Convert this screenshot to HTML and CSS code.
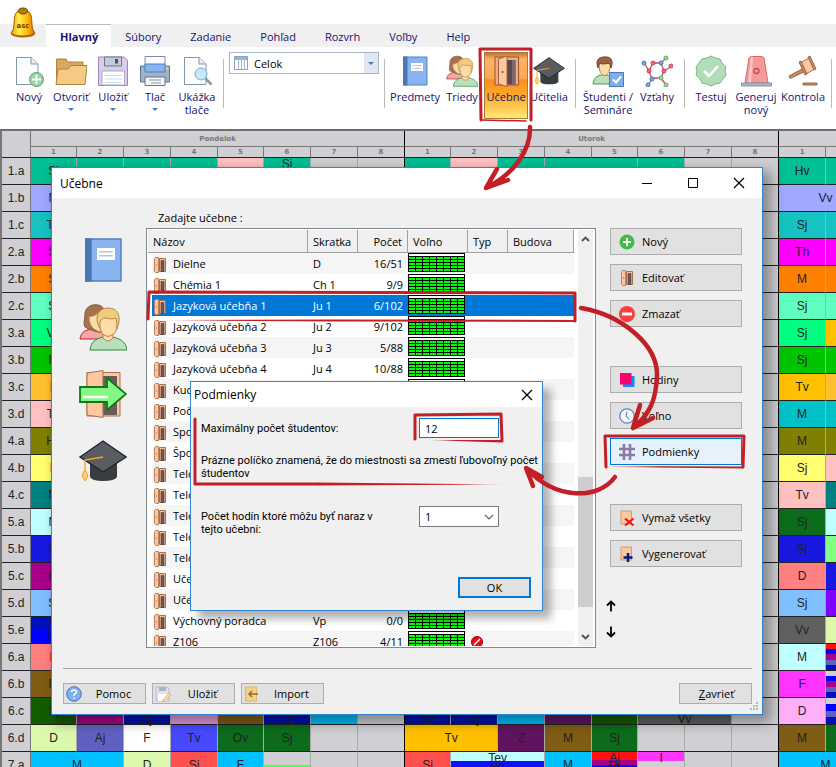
FILE: index.html
```html
<!DOCTYPE html>
<html lang="sk">
<head>
<meta charset="utf-8">
<title>Učebne</title>
<link rel="stylesheet" href="styles.css">
</head>
<body>
<svg class="defs" aria-hidden="true">
  <symbol id="door" viewBox="0 0 12 16">
    <path d="M5.500 1.500H11.500V14.500H5.500Z" fill="#fcbf94" stroke="#a5714f"/>
    <path d="M7 3.500H10V14.500H7Z" fill="#6b595c" stroke="#4b3c40" stroke-width=".6"/>
    <path d="M.5 1.500L1.500 .5H4.500V15.500H1.500L.5 14.500Z" fill="#ffc6a0" stroke="#b98260"/>
    <circle cx="2.500" cy="8" r=".6" fill="#8d5038"/>
  </symbol>
  <symbol id="book" viewBox="0 0 32 32">
    <path d="M4.500 2H28V30H4.500Z" fill="#8ab4f0" stroke="#5580c0"/>
    <path d="M4 1.500H8.500V30.500H4Z" fill="#4b77b8"/>
    <path d="M12 8H24V16H12Z" fill="#fff"/>
    <path d="M13.500 10.500H22.500M13.500 13.200H22.500" stroke="#b4c4de"/>
  </symbol>
  <symbol id="people" viewBox="0 0 48 48">
    <path d="M1 36C2 28 8 26 16 26C24 26 28 28 29 36Z" fill="#f5a6a6" stroke="#b8232a"/>
    <path d="M6 24C4 20 6 17 6 10C7 3 14 1 19 2C25 3 27 8 26 15L24 29C17 30 10 26 6 24Z" fill="#a5714f" stroke="#85543a"/>
    <path d="M10 14Q17 13 20 9L25 14V28Q19 30 15 26Q10 22 10 14Z" fill="#fddcaa" stroke="#b5894a"/>
    <path d="M11 47C12 38 17 36 24 34H34C42 36 47 39 48 47Z" fill="#bbdfbb" stroke="#2f8a45"/>
    <path d="M24 31V35Q29 41 34 35V31Z" fill="#fddcaa" stroke="#b5894a"/>
    <path d="M20 24C15 13 20 5 29 5C39 5 43 13 38 26L34 31H25Z" fill="#f1ca7c" stroke="#b5894a"/>
    <path d="M21 18Q25 14 27 15Q33 17 37 15Q40 29 33 32Q29 35 25 32Q20 28 21 18Z" fill="#fddcaa" stroke="#b5894a"/>
  </symbol>
  <symbol id="cap" viewBox="0 0 48 48">
    <path d="M11 23V40Q13 44 24 44Q36 44 38 40V23Z" fill="#3b3c40"/>
    <path d="M1 20L24 4L47 20L24 35Z" fill="#5b5c62" stroke="#1b2733" stroke-width="1.400"/>
    <path d="M24 20L6 23V35" fill="none" stroke="#f5a623" stroke-width="1.400"/>
    <path d="M5 34H7L9 39L6 44L3 39Z" fill="#ffcf6a" stroke="#f5a623"/>
  </symbol>
  <symbol id="sheet" viewBox="0 0 32 32">
    <path d="M3.500 2.500H18L25 9V29.500H3.500Z" fill="#fcfdff" stroke="#8395a8"/>
    <path d="M18 2.500V9H25" fill="#e8edf3" stroke="#8395a8"/>
  </symbol>
  <symbol id="wall" viewBox="0 0 16 16">
    <path d="M2 1H12.500V14H2Z" fill="#fcc8a2" stroke="#d39a70"/>
  </symbol>
</svg>

<div class="screen">
<header class="ribbon">
  <svg class="bell" viewBox="0 0 28 32" aria-hidden="true">
    <defs><linearGradient id="gold"><stop offset="0" stop-color="#e8a000"/><stop offset=".35" stop-color="#fff04a"/><stop offset=".7" stop-color="#ffb400"/><stop offset="1" stop-color="#c86e00"/></linearGradient></defs>
    <ellipse cx="14" cy="27" rx="12" ry="3.500" fill="#b06a28"/>
    <path d="M4 23C6 18 4 8 8 5Q14 1 20 5C24 8 22 18 24 23L26 26Q22 29 14 29Q5 29 2 26Z" fill="url(#gold)" stroke="#a85a00"/>
    <ellipse cx="14" cy="4" rx="4.500" ry="3" fill="#b57a10" stroke="#744500"/>
    <text x="14" y="21" text-anchor="middle" class="bell-text">asc</text>
  </svg>
  <nav class="tabs">
    <a class="tab active" href="#">Hlavný</a>
    <a class="tab" href="#">Súbory</a>
    <a class="tab" href="#">Zadanie</a>
    <a class="tab" href="#">Pohľad</a>
    <a class="tab" href="#">Rozvrh</a>
    <a class="tab" href="#">Voľby</a>
    <a class="tab" href="#">Help</a>
  </nav>
  <div class="tools">
    <button class="tool"><svg viewBox="0 0 32 32"><use href="#sheet"/><circle cx="23.500" cy="24.500" r="7" fill="#9bd3a4" stroke="#5aa86a"/><path d="M23.500 20V29M19 24.500H28" stroke="#fff" stroke-width="2"/></svg>Nový</button>
    <button class="tool"><svg viewBox="0 0 32 32"><path d="M1.500 29V4H11L13 7H28V29Z" fill="#d9a95f" stroke="#b0823c"/><path d="M1 29.500L3 14H13L16 10.500H32L30 29.500Z" fill="#f3cb82" stroke="#b0823c"/></svg>Otvoriť<i class="drop"></i></button>
    <button class="tool"><svg viewBox="0 0 32 32"><path d="M1.500 2H27L30.500 5.500V30.500H1.500Z" fill="#d8cdec" stroke="#9a86ba"/><path d="M7.500 2H24.500V11H7.500Z" fill="#c3ccd8" stroke="#6b7886"/><path d="M18 4H21V8.500H18Z" fill="#4a5561"/><path d="M5 16H27.500V30H5Z" fill="#fff" stroke="#b3a6cc"/><path d="M8 20.500H25M8 24H25M8 27.500H25" stroke="#bfe0f6"/></svg>Uložiť<i class="drop"></i></button>
    <button class="tool"><svg viewBox="0 0 32 32"><path d="M1.500 11H30.500V27H1.500Z" fill="#9fb2c8" stroke="#5f7990"/><path d="M6 1.500H26V10H6Z" fill="#fbfcfe" stroke="#7c8fa4"/><path d="M6 9H26V17H6Z" fill="#86b4f0" stroke="#567fb5"/><path d="M6 22H26V30.500H6Z" fill="#f4f6f9" stroke="#60758a"/><path d="M10 25H22M12 28H22" stroke="#8897a7"/><circle cx="28" cy="13.500" r="1" fill="#ffe16b"/></svg>Tlač<i class="drop"></i></button>
    <button class="tool"><svg viewBox="0 0 32 32"><use href="#sheet"/><circle cx="20" cy="19" r="6" fill="#c7e7fb" stroke="#7fa6c5"/><path d="M24.500 23.500L30.500 29.500" stroke="#8b97a5" stroke-width="2.500"/></svg>Ukážka<br>tlače</button>
    <span class="sep"></span>
    <label class="scope"><svg viewBox="0 0 14 14"><path d="M.5 .5H13.500V13.500H.5Z" fill="#fff" stroke="#8fa0b4"/><path d="M1 1H13V4H1Z" fill="#7cb8ec"/><path d="M4.500 1V13M7.500 1V13M10.500 1V13" stroke="#a9bccb"/></svg><select aria-label="Rozsah"><option>Celok</option></select><span class="scope-arrow"><i class="drop"></i></span></label>
    <span class="sep"></span>
    <button class="tool w50"><svg viewBox="0 0 32 32"><use href="#book"/></svg>Predmety</button>
    <button class="tool w44"><svg viewBox="0 0 48 48"><use href="#people"/></svg>Triedy</button>
    <button class="tool w44 pressed"><svg viewBox="0 0 32 32"><path d="M5 2H28.500V30H5Z" fill="#f3ae85" stroke="#8d5638"/><path d="M10 5H25.500V29.500H10Z" fill="#5a484c"/><path d="M22 5H25.500V29.500H22Z" fill="#7a686b"/><path d="M8.500 4L17 .8V31.500L8.500 29Z" fill="#ffc6a0" stroke="#a5603c"/><circle cx="12.500" cy="17" r="1" fill="#8d5038"/></svg>Učebne</button>
    <button class="tool"><svg viewBox="0 0 48 48"><use href="#cap"/></svg>Učitelia</button>
    <span class="sep"></span>
    <button class="tool w54"><svg viewBox="0 0 32 32"><path d="M1 29C2 21 7 20 12 20C18 20 21 22 22 29Z" fill="#bbdfbb" stroke="#4e9c60"/><path d="M7 9Q7 20 12.500 20.500Q18 20 18.500 9Q12 6 7 9Z" fill="#fddcaa" stroke="#b5894a"/><path d="M6 13C3 5 7 2 12 2C19 1 22 6 19 13Q18 9 17 8Q10 10 8 8Q7 9 6 13Z" fill="#996246" stroke="#714630"/><path d="M17.500 17.500H31.500V31.500H17.500Z" fill="#7eadf0" stroke="#4d77b5"/><path d="M21 24.500L24 27.500L29 21.500" fill="none" stroke="#fff" stroke-width="2"/></svg>Študenti /<br>Semináre</button>
    <button class="tool w44"><svg viewBox="0 0 32 32"><path d="M3 8L8 16L11 24L7 30M8 16L12 8H20L23 16L31 11M20 8L25 3M23 16L20 23H12M20 23L25 30" fill="none" stroke="#c7525c" stroke-width="1.300"/><g fill="#ee6a75" stroke="#c44854"><circle cx="8" cy="16" r="2"/><circle cx="12" cy="8" r="2"/><circle cx="23" cy="16" r="2"/><circle cx="30" cy="11" r="2"/></g><g fill="#78a8e8" stroke="#4878b8"><circle cx="3" cy="8" r="2"/><circle cx="20" cy="8" r="2"/><circle cx="11" cy="24" r="2"/><circle cx="7" cy="30" r="2"/></g><g fill="#a4d8ac" stroke="#5aa86a"><circle cx="25" cy="3" r="2"/><circle cx="20" cy="23" r="2"/><circle cx="25" cy="30" r="2"/></g></svg>Vzťahy</button>
    <span class="sep"></span>
    <button class="tool"><svg viewBox="0 0 32 32"><path d="M16 1L20 3L25 4L27 8L31 12L30 16L31 20L28 24L25 28L20 29L16 31L12 29L7 28L5 24L1 20L2 16L1 12L4 8L7 4L12 3Z" fill="#b2ddb6" stroke="#78b885"/><path d="M9 16L14 21L23 11" fill="none" stroke="#fff" stroke-width="2.500"/></svg>Testuj</button>
    <button class="tool w48"><svg viewBox="0 0 32 32"><path d="M5 28L9 3Q10 1.500 12 1.500H21Q23 1.500 24 3L28 28Z" fill="#f49a9a" stroke="#d66"/><path d="M13 2L11 28H8L11 2Z" fill="#ffc6c6"/><circle cx="16.500" cy="16" r="2.500" fill="none" stroke="#c44854" stroke-width="1.300"/><path d="M1.500 28H31.500V31H1.500Z" fill="#a8b8c8" stroke="#8395a8"/></svg>Generuj<br>nový</button>
    <button class="tool w46"><svg viewBox="0 0 32 32"><path d="M15 14L2 21L3 23.500L17 17Z" fill="#c58d66" stroke="#9a6848"/><path d="M13 8L22 3L28 14L19 19Z" fill="#fcc8a2" stroke="#a5714f"/><path d="M12 7L14 6L20 19L18 20ZM21 2L23 1L29 14L27 15Z" fill="#c58d66" stroke="#9a6848"/><path d="M16 28H30V30H16Z" fill="#c58d66" stroke="#9a6848"/></svg>Kontrola</button>
    <span class="sep"></span>
  </div>
</header>

<main class="timetable-wrap">
<table class="timetable">
  <colgroup><col class="c-class"><col class="c46"><col><col><col><col class="c46"><col><col><col><col class="c46"><col><col><col><col class="c46"><col><col><col><col><col></colgroup>
  <thead>
    <tr class="days"><th rowspan="2"></th><th colspan="8" class="dayend">Pondelok</th><th colspan="8" class="dayend">Utorok</th><th colspan="2"></th></tr>
    <tr class="periods"><th>1</th><th>2</th><th>3</th><th>4</th><th>5</th><th>6</th><th>7</th><th class="dayend">8</th><th>1</th><th>2</th><th>3</th><th>4</th><th>5</th><th>6</th><th>7</th><th class="dayend">8</th><th>1</th><th></th></tr>
  </thead>
  <tbody>
    <tr><th>1.a</th><td class="jade">Sj</td><td class="jade"></td><td class="jade"></td><td class="jade"></td><td class="rose"></td><td class="jade top">Sj</td><td></td><td class="dayend"></td><td class="jade"></td><td class="rose"></td><td class="jade"></td><td class="jade" colspan="2"></td><td class="jade"></td><td></td><td class="dayend"></td><td class="jade">Hv</td><td class="jade"></td></tr>
    <tr><th>1.b</th><td class="peri">M</td><td colspan="15" class="dayend"></td><td class="peri" colspan="2">Vv</td></tr>
    <tr><th>1.c</th><td class="teal">Th</td><td colspan="15" class="dayend"></td><td class="teal">Sj</td><td class="teal"></td></tr>
    <tr><th>2.a</th><td class="magenta">Sj</td><td colspan="15" class="dayend"></td><td class="magenta">Th</td><td class="magenta"></td></tr>
    <tr><th>2.b</th><td class="orange">Sj</td><td colspan="15" class="dayend"></td><td class="orange">M</td><td class="orange"></td></tr>
    <tr><th>2.c</th><td class="mint">Sj</td><td colspan="15" class="dayend"></td><td class="mint">Sj</td><td class="mint"></td></tr>
    <tr><th>3.a</th><td class="spring">Vv</td><td colspan="15" class="dayend"></td><td class="spring">Sj</td><td class="gold"></td></tr>
    <tr><th>3.b</th><td class="green">M</td><td colspan="15" class="dayend"></td><td class="green">Sj</td><td class="green"></td></tr>
    <tr><th>3.c</th><td class="amber">F</td><td colspan="15" class="dayend"></td><td class="gold">Tv</td><td class="amber"></td></tr>
    <tr><th>3.d</th><td class="rose">Tv</td><td colspan="15" class="dayend"></td><td class="cyan">M</td><td class="cyan"></td></tr>
    <tr><th>4.a</th><td class="olive">Hv</td><td colspan="15" class="dayend"></td><td class="olive">M</td><td class="olive"></td></tr>
    <tr><th>4.b</th><td class="lemon">F</td><td colspan="15" class="dayend"></td><td class="lemon">Sj</td><td class="rose"></td></tr>
    <tr><th>4.c</th><td class="dteal">M</td><td colspan="15" class="dayend"></td><td class="rose">Tv</td><td class="dteal"></td></tr>
    <tr><th>5.a</th><td class="ice">M</td><td colspan="15" class="dayend"></td><td class="forest">Sj</td><td class="ice"></td></tr>
    <tr><th>5.b</th><td class="blue">Sj</td><td colspan="15" class="dayend"></td><td class="blue">Sj</td><td class="lime"></td></tr>
    <tr><th>5.c</th><td class="plum">M</td><td colspan="15" class="dayend"></td><td class="coral">D</td><td class="blue"></td></tr>
    <tr><th>5.d</th><td class="sky">Sj</td><td colspan="15" class="dayend"></td><td class="sky">Sj</td><td class="violet"></td></tr>
    <tr><th>5.e</th><td class="split-blue">Aj<br>Nj</td><td colspan="15" class="dayend"></td><td class="gray">Vv</td><td class="pale"></td></tr>
    <tr><th>6.a</th><td class="coral redtext">D</td><td colspan="15" class="dayend"></td><td class="ice">M</td><td class="stripes-a"></td></tr>
    <tr><th>6.b</th><td class="brown">M</td><td colspan="15" class="dayend"></td><td class="fuchsia">F</td><td class="stripes-b"></td></tr>
    <tr><th>6.c</th><td class="moss">Sj</td><td class="plum"></td><td class="navy bottom">Aj</td><td class="orchid"></td><td class="brown"></td><td class="navy bottom">Tv</td><td class="azure"></td><td class="dayend"></td><td class="navy bottom">Tv</td><td class="navy bottom">Aj</td><td class="azure"></td><td class="wine"></td><td class="moss"></td><td class="gray bottom" colspan="2">Vv</td><td class="dayend"></td><td class="pink">D</td><td class="stripes-c"></td></tr>
    <tr><th>6.d</th><td class="pale">D</td><td class="slate">Aj</td><td class="white">F</td><td class="royal">Tv</td><td class="forest">Ov</td><td class="forest">Sj</td><td></td><td class="dayend"></td><td class="gold" colspan="2">Tv</td><td class="wine">Z</td><td class="brown">M</td><td class="forest">Sj</td><td></td><td></td><td class="dayend"></td><td class="brown">M</td><td class="forest"></td></tr>
    <tr><th>7.a</th><td class="azure" colspan="2">M</td><td class="pale">D</td><td class="red">Sj</td><td class="azure">F</td><td class="half-lime"></td><td></td><td class="dayend"></td><td class="red">Sj</td><td class="half-ice" colspan="2">Tev<br>Pp</td><td class="azure">M</td><td class="stripes-d">Aj<br>Rj</td><td class="half-pink top">I</td><td></td><td class="dayend"></td><td class="azure" colspan="2">M</td></tr>
  </tbody>
</table>
</main>

<section class="window rooms" aria-label="Učebne">
  <div class="titlebar"><span>Učebne</span>
    <div class="winbtns">
      <button aria-label="Minimalizovať"><svg viewBox="0 0 12 12"><path d="M1 6.500H11" stroke="#000"/></svg></button>
      <button aria-label="Maximalizovať"><svg viewBox="0 0 12 12"><path d="M1.500 1.500H10.500V10.500H1.500Z" fill="none" stroke="#000"/></svg></button>
      <button aria-label="Zatvoriť"><svg viewBox="0 0 12 12"><path d="M1 1L11 11M11 1L1 11" stroke="#000" stroke-width="1.200"/></svg></button>
    </div>
  </div>
  <div class="rooms-body">
    <nav class="side">
      <svg viewBox="0 0 32 32"><use href="#book"/></svg>
      <svg viewBox="0 0 48 48"><use href="#people"/></svg>
      <svg viewBox="0 0 48 48"><path d="M8 2.500H41V46H8Z" fill="#fcc8a2" stroke="#a5714f"/><path d="M24 6H38V45H24Z" fill="#6b595c"/><path d="M8 3L24 .5V47.500L8 45Z" fill="#ffc6a0" stroke="#a5714f"/><path d="M1 17H28V8L47 24L28 40V32H1Z" fill="#84f884" stroke="#107818" stroke-width="1.800"/><path d="M4 27H29" stroke="#fff" stroke-width="2.500"/></svg>
      <svg viewBox="0 0 48 48"><use href="#cap"/></svg>
    </nav>
    <div class="list-col">
      <div class="caption">Zadajte učebne :</div>
      <div class="listbox">
        <div class="viewport">
        <table class="list">
          <colgroup><col class="l160"><col class="l50"><col class="l50"><col class="l60"><col class="l40"><col></colgroup>
          <thead><tr><th>Názov</th><th>Skratka</th><th class="num">Počet</th><th>Voľno</th><th>Typ</th><th>Budova</th></tr></thead>
          <tbody>
            <tr><td><svg><use href="#door"/></svg>Dielne</td><td>D</td><td class="num">16/51</td><td class="free"><i></i></td><td></td><td></td></tr>
            <tr><td><svg><use href="#door"/></svg>Chémia 1</td><td>Ch 1</td><td class="num">9/9</td><td class="free"><i></i></td><td></td><td></td></tr>
            <tr class="selected"><td><svg><use href="#door"/></svg>Jazyková učebňa 1</td><td>Ju 1</td><td class="num">6/102</td><td class="free"><i></i></td><td></td><td></td></tr>
            <tr><td><svg><use href="#door"/></svg>Jazyková učebňa 2</td><td>Ju 2</td><td class="num">9/102</td><td class="free"><i></i></td><td></td><td></td></tr>
            <tr><td><svg><use href="#door"/></svg>Jazyková učebňa 3</td><td>Ju 3</td><td class="num">5/88</td><td class="free"><i></i></td><td></td><td></td></tr>
            <tr><td><svg><use href="#door"/></svg>Jazyková učebňa 4</td><td>Ju 4</td><td class="num">10/88</td><td class="free"><i></i></td><td></td><td></td></tr>
            <tr><td><svg><use href="#door"/></svg>Kuc</td><td></td><td></td><td class="free"><i></i></td><td></td><td></td></tr>
            <tr><td><svg><use href="#door"/></svg>Poč</td><td></td><td></td><td></td><td></td><td></td></tr>
            <tr><td><svg><use href="#door"/></svg>Spo</td><td></td><td></td><td></td><td></td><td></td></tr>
            <tr><td><svg><use href="#door"/></svg>Špo</td><td></td><td></td><td></td><td></td><td></td></tr>
            <tr><td><svg><use href="#door"/></svg>Telo</td><td></td><td></td><td></td><td></td><td></td></tr>
            <tr><td><svg><use href="#door"/></svg>Telo</td><td></td><td></td><td></td><td></td><td></td></tr>
            <tr><td><svg><use href="#door"/></svg>Telo</td><td></td><td></td><td></td><td></td><td></td></tr>
            <tr><td><svg><use href="#door"/></svg>Telo</td><td></td><td></td><td></td><td></td><td></td></tr>
            <tr><td><svg><use href="#door"/></svg>Telo</td><td></td><td></td><td></td><td></td><td></td></tr>
            <tr><td><svg><use href="#door"/></svg>Uče</td><td></td><td></td><td></td><td></td><td></td></tr>
            <tr><td><svg><use href="#door"/></svg>Uče</td><td></td><td></td><td></td><td></td><td></td></tr>
            <tr><td><svg><use href="#door"/></svg>Výchovný poradca</td><td>Vp</td><td class="num">0/0</td><td class="free"><i></i></td><td></td><td></td></tr>
            <tr><td><svg><use href="#door"/></svg>Z106</td><td>Z106</td><td class="num">4/11</td><td class="free"><i></i></td><td class="kind"><svg class="ban" viewBox="0 0 12 12"><circle cx="6" cy="6" r="5.500" fill="#e81010" stroke="#900"/><path d="M3 9L9 3" stroke="#fff" stroke-width="1.500"/></svg></td><td></td></tr>
          </tbody>
        </table>
        </div>
        <div class="scroll">
          <svg viewBox="0 0 15 18"><path d="M4 11L7.500 7.500L11 11" fill="none" stroke="#505050" stroke-width="1.800"/></svg>
          <div class="track"><div class="thumb"></div></div>
          <svg viewBox="0 0 15 18"><path d="M4 7L7.500 10.500L11 7" fill="none" stroke="#505050" stroke-width="1.800"/></svg>
        </div>
      </div>
    </div>
    <div class="actions">
      <div class="group">
        <button class="act"><svg viewBox="0 0 16 16"><circle cx="8" cy="8" r="7.500" fill="#43bb4b"/><path d="M8 4V12M4 8H12" stroke="#fff" stroke-width="2"/></svg>Nový</button>
        <button class="act"><svg viewBox="0 0 12 16"><use href="#door"/></svg>Editovať</button>
        <button class="act"><svg viewBox="0 0 16 16"><circle cx="8" cy="8" r="8" fill="#fb3e3e"/><path d="M3 8H13" stroke="#fff" stroke-width="3"/></svg>Zmazať</button>
      </div>
      <div class="group">
        <button class="act"><svg viewBox="0 0 16 16"><path d="M4 4H15.500V15H4Z" fill="#0c8cff"/><path d="M1 1H12.500V12.500H1Z" fill="#ff0070"/></svg>Hodiny</button>
        <button class="act"><svg viewBox="0 0 16 16"><circle cx="8" cy="8" r="7.200" fill="#f4f9ff" stroke="#5a7fb0" stroke-width="1.200"/><path d="M8 3.500L7 8L10 11.500" fill="none" stroke="#5f7390"/></svg>Voľno</button>
        <button class="act focused"><svg viewBox="0 0 16 16"><path d="M5 0V16M11 0V16M0 5H16M0 11H16" stroke="#8d78a8" stroke-width="2.600"/></svg>Podmienky</button>
      </div>
      <div class="group">
        <button class="act"><svg viewBox="0 0 16 16"><use href="#wall"/><path d="M6 8.500L14.500 15.500M14.500 8.500L6 15.500" stroke="#f01010" stroke-width="2"/></svg>Vymaž všetky</button>
        <button class="act"><svg viewBox="0 0 16 16"><use href="#wall"/><path d="M9 7V16M4.500 11.500H13.500" stroke="#001c80" stroke-width="2.500"/></svg>Vygenerovať</button>
      </div>
      <div class="moves">
        <button aria-label="Hore"><svg viewBox="0 0 12 12"><path d="M6 11.500V1.500M2 5.500L6 1.500L10 5.500" fill="none" stroke="#000" stroke-width="1.800"/></svg></button>
        <button aria-label="Dole"><svg viewBox="0 0 12 12"><path d="M6 .5V10.500M2 6.500L6 10.500L10 6.500" fill="none" stroke="#000" stroke-width="1.800"/></svg></button>
      </div>
    </div>
  </div>
  <footer class="foot">
    <button><svg viewBox="0 0 16 16"><circle cx="8" cy="8" r="7.300" fill="#7fb0f4" stroke="#4a72b0"/><path d="M5.500 6Q5.500 4 8 4Q10.500 4 10.500 6Q10.500 7.500 8 8.500V10M8 11.500V13" fill="none" stroke="#fff" stroke-width="1.400"/></svg><span>Pomoc</span></button>
    <button><svg viewBox="0 0 16 16"><path d="M1 1H12L14 3V15H1Z" fill="#e4dcf0" stroke="#c3b6d6"/><path d="M4 1H11V5H4Z" fill="#a9b4c4"/><path d="M3 8H12V15H3Z" fill="#fff"/><path d="M8 14L14 7L16 9L10 15L7.500 15.500Z" fill="#f3dc9c" stroke="#c6ab70" stroke-width=".7"/></svg><span>Uložiť</span></button>
    <button><svg viewBox="0 0 16 16"><path d="M1.500 1H12.500V15H1.500Z" fill="#f4cf86" stroke="#dfb566"/><path d="M5 8H14M8 5L5 8L8 11" fill="none" stroke="#8a6d40" stroke-width="1.500"/></svg><span>Import</span></button>
    <button class="close"><span><u>Z</u>avrieť</span></button>
  </footer>
  <svg class="grip" viewBox="0 0 9 9" aria-hidden="true"><path d="M6 0H8V2H6ZM3 3H5V5H3ZM6 3H8V5H6ZM0 6H2V8H0ZM3 6H5V8H3ZM6 6H8V8H6Z" fill="#b8b8b8"/></svg>
</section>

<section class="window limits" aria-label="Podmienky">
  <div class="titlebar"><span>Podmienky</span>
    <div class="winbtns"><button aria-label="Zatvoriť"><svg viewBox="0 0 12 12"><path d="M1 1L11 11M11 1L1 11" stroke="#000" stroke-width="1.200"/></svg></button></div>
  </div>
  <form class="limits-body">
    <div class="field"><label for="max">Maximálny počet študentov:</label><input id="max" type="text" value="12"></div>
    <p>Prázne políčko znamená, že do miestnosti sa zmestí ľubovoľný počet študentov</p>
    <div class="field lessons"><label for="lessons">Počet hodín ktoré môžu byť naraz v tejto učebni:</label>
      <span class="combo"><select id="lessons"><option>1</option></select><svg viewBox="0 0 10 6"><path d="M1 1L5 5L9 1" fill="none" stroke="#606060" stroke-width="1.200"/></svg></span></div>
    <button class="ok" type="button">OK</button>
  </form>
</section>

<svg class="marks" viewBox="0 0 836 767" aria-hidden="true">
  <defs><linearGradient id="fade"><stop offset="0" stop-color="#c22026"/><stop offset=".7" stop-color="#c22026"/><stop offset="1" stop-color="#c22026" stop-opacity="0"/></linearGradient>
  <linearGradient id="fadeback"><stop offset="0" stop-color="#c22026" stop-opacity="0"/><stop offset=".4" stop-color="#c22026"/></linearGradient></defs>
  <g fill="none" stroke="#c22026" stroke-linecap="round" stroke-linejoin="round" stroke-width="3">
    <path d="M481 120L480 49L531 49L531 120" />
    <path d="M481 120L526 121" stroke-width="1.500"/>
    <path d="M530 127C531 150 514 174 486 188M497 169L486 188L508 180" stroke-width="4.500"/>
    <path d="M148 319L149 292L575 293L575 321" />
    <path d="M575 321L330 320.500" stroke-width="2"/>
    <path d="M581 308C622 315 658 345 657 376C656 400 650 414 633 428M640 405L633 428L653 418" stroke-width="4.500"/>
    <path d="M606 467L605 436L744 436L743 467" />
    <path d="M415 439L415 415L501 414L502 441" />
    <path d="M195 419L195 484L318 484" />
    <path d="M615 477C598 500 556 500 527 469M533 486L526 468L542 477" stroke-width="4.500"/>
  </g>
  <path d="M164 320L330 319.500V321.500L164 320.500Z" fill="url(#fadeback)"/>
  <path d="M606 466L743 466.500V468.500L606 467Z" fill="url(#fadeback)"/>
  <path d="M424 440L502 440V442.500Z" fill="url(#fadeback)"/>
  <path d="M318 482.500L515 484.500L318 485.500Z" fill="url(#fade)"/>
</svg>
</div>
</body>
</html>
```
FILE: styles.css
```css
* { box-sizing: border-box; }
body { margin: 0; font: 11px/13px "Open Sans", "Noto Sans", sans-serif; color: #000; background: #fff; }
button, input, select { font: inherit; color: inherit; padding: 0; margin: 0; border: 0; background: none; border-radius: 0; }
.defs { position: absolute; width: 0; height: 0; }
.screen { position: relative; height: 100vh; min-height: 767px; overflow: hidden; }

/* ribbon */
.ribbon { position: relative; padding-top: 24px; color: #14146e; }
.bell { position: absolute; left: 9px; top: 7px; width: 28px; height: 32px; }
.bell-text { font: bold 7px "DejaVu Sans", sans-serif; fill: #7a3c00; }
.tabs { display: flex; background: #f0f0f0; height: 23px; padding-left: 46px; }
.tab { color: inherit; text-decoration: none; line-height: 26px; padding: 0 15px 0 14px; }
.tab.active { background: #fff; border-top: 1px solid #bbb; line-height: 24px; padding: 0 13px 0 14px; font-weight: bold; }
.tools { display: flex; height: 82px; padding: 5px 0 0 8px; white-space: nowrap; }
.tool { width: 42px; height: 67px; flex: none; display: flex; flex-direction: column; align-items: center; text-align: center; padding-top: 3px; line-height: 13px; }
.tool > svg { width: 32px; height: 32px; margin-bottom: 3px; flex: none; }
.tool .drop { margin-top: 5px; }
.tool.w44 { width: 44px; }
.tool.w46 { width: 46px; }
.tool.w48 { width: 48px; }
.tool.w50 { width: 50px; }
.tool.w54 { width: 54px; }
.pressed { background: linear-gradient(#c4762e, #ffb367 10%, #ffa64d 40%, #fb8b1e 41%, #ffb02e 70%, #ffe878); border: 1px solid #a57a3c; padding-top: 2px; }
.sep { flex: none; width: 1px; height: 49px; background: #bbb; margin: 7px 5px 0; }
.drop { border: 3px solid transparent; border-top-color: #4c78b8; border-bottom: 0; }
.scope { flex: none; display: flex; align-items: center; width: 150px; height: 22px; border: 1px solid #aab4c8; color: #000; padding-left: 4px; }
.scope svg { width: 14px; height: 14px; }
.scope select { appearance: none; flex: 1; margin-left: 6px; }
.scope-arrow { width: 14px; height: 20px; background: #e2e6f0; display: flex; align-items: center; justify-content: center; }

/* timetable */
.timetable-wrap { overflow: hidden; border-top: 2px solid #6e6e6e; border-left: 2px solid #777; background: #d0d0d4; }
.timetable { table-layout: fixed; width: 871px; border-collapse: separate; border-spacing: 0; font: 12px/13px "Liberation Sans", sans-serif; color: #222; }
.timetable col { width: 47px; }
.timetable .c-class { width: 29px; }
.timetable .c46 { width: 46px; }
.timetable th, .timetable td { padding: 0; text-align: center; border-right: 1px solid #aaa; border-bottom: 1px solid #222; font-weight: normal; }
.timetable tbody tr { height: 27px; }
.timetable th:first-child { border-right-color: #777; }
.timetable .dayend { border-right-color: #000; }
.timetable thead th { font: bold 7px/8px "DejaVu Sans", sans-serif; color: #777; border-right-color: #777; }
.timetable thead .dayend { border-right-color: #000; }
.timetable .days { height: 16px; }
.timetable .days th { border-bottom-color: #777; }
.timetable .days th:first-child { border-bottom-color: #222; }
.timetable .periods { height: 11px; }
.timetable .top { vertical-align: top; }
.timetable .bottom { vertical-align: bottom; line-height: 10px; }
.jade { background: #00c094; }
.rose { background: #ffc0c0; }
.peri { background: #a0a8ff; }
.teal { background: #16c2c2; }
.magenta { background: #f0f; }
.orange { background: #ff8000; }
.mint { background: #60ffc0; }
.spring { background: #00ff80; }
.green { background: #00c400; }
.gold { background: #ffc000; }
.amber { background: #ffc030; }
.cyan { background: #00c0c8; }
.olive { background: #808000; }
.lemon { background: #ffff70; }
.dteal { background: #008080; }
.ice { background: #c0ffff; }
.forest { background: #0c6c1c; }
.blue { background: #1818e0; }
.lime { background: #80ff80; }
.plum { background: #a80088; }
.coral { background: #ff8080; }
.redtext { color: #e02020; }
.sky { background: #80c0ff; }
.violet { background: #8000ff; }
.gray { background: #606060; }
.pale { background: #dcf8ac; }
.brown { background: #805c14; }
.fuchsia { background: #ff34ff; }
.moss { background: #145c00; }
.navy { background: #0010b0; }
.orchid { background: #e898dc; }
.azure { background: #00c0ff; }
.wine { background: #601460; }
.pink { background: #ffb0f8; }
.slate { background: #6060c0; }
.white { background: #fff; }
.royal { background: #4848ff; }
.red { background: #ff5050; }
.split-blue { background: linear-gradient(#0010c0 50%, #0000ff 50%); }
.half-lime { background: linear-gradient(#d0d0d4 50%, #50ff50 50%); }
.half-ice { background: linear-gradient(#c0ffff 35%, #1010ff 35%); line-height: 8px; }
.half-pink { background: linear-gradient(#ff34ff 33%, #d0d0d4 33%); }
.stripes-a { background: linear-gradient(#f11 20%, #00f 20% 40%, #a80088 40% 60%, #6060c0 60% 80%, #0010c0 80%); }
.stripes-b { background: linear-gradient(#d0d0d4 20%, #00f 20% 40%, #a80088 40% 60%, #6060c0 60% 80%, #0010c0 80%); }
.stripes-c { background: linear-gradient(#d0d0d4 25%, #00f 25% 50%, #6060c0 50% 75%, #0010c0 75%); }
.stripes-d { background: linear-gradient(#f11 30%, #a80088 30% 50%, #00f 50%); line-height: 8px; }
.timetable .half-ice, .timetable .stripes-d { vertical-align: top; padding-top: 2px; }

/* windows */
.window { position: absolute; background: #f0f0f0; border: 1px solid #2f86cf; box-shadow: 6px 6px 12px 2px rgba(0,0,0,.35); }
.titlebar { display: flex; justify-content: space-between; align-items: center; height: 30px; background: #fff; padding-left: 8px; font-size: 12px; }
.winbtns { display: flex; }
.winbtns button { width: 46px; height: 28px; display: flex; align-items: center; justify-content: center; }
.winbtns svg { width: 12px; height: 12px; }
.rooms { left: 51px; right: 73px; top: 167px; }
.rooms-body { display: flex; padding-right: 20px; }
.side { width: 94px; padding: 38px 0 0 27px; display: flex; flex-direction: column; gap: 19px; }
.side svg { width: 48px; height: 48px; }
.list-col { flex: 1; min-width: 0; }
.caption { height: 30px; padding-left: 12px; line-height: 40px; }
.listbox { display: flex; height: 420px; border: 1px solid #828790; background: #fff; padding: 1px 2px 1px 1px; }
.viewport { flex: 1; overflow: hidden; padding-right: 4px; }
.list { table-layout: fixed; width: 100%; border-collapse: separate; border-spacing: 0; }
.l160 { width: 160px; }
.l50 { width: 50px; }
.l60 { width: 60px; }
.l40 { width: 40px; }
.list th { height: 23px; padding: 0 5px; text-align: left; font-weight: normal; background: #f0f0f0; border-right: 1px solid #a0a0a0; border-bottom: 1px solid #a0a0a0; }
.list td { height: 21px; padding: 0 5px; white-space: nowrap; line-height: 20px; }
.list td:first-child { border-left: 4px solid #fff; padding-left: 2px; background-clip: padding-box; }
.list td:first-child svg { width: 12px; height: 16px; vertical-align: middle; margin-right: 7px; }
.list .num { text-align: right; }
.list tbody tr:nth-child(odd) td { background-color: #f5f5f5; }
.list tbody tr.selected td { background-color: #0078d7; color: #fff; }
.list td.free { padding: 0; vertical-align: top; }
.list td.kind { padding: 0 3px; }
.free i { display: block; width: 57px; height: 19px; border: 1px solid #000; border-bottom: 0;
  background: linear-gradient(#fff 2px, #000 2px, #000 3px, transparent 3px), repeating-linear-gradient(90deg, transparent 0 6px, #000 6px 7px), repeating-linear-gradient(#0f0 0 2px, #000 2px 3px); }
.list .ban { width: 12px; height: 12px; display: block; }
.scroll { width: 15px; background: #f0f0f0; display: flex; flex-direction: column; }
.scroll svg { width: 15px; height: 18px; }
.track { flex: 1; display: flex; flex-direction: column; justify-content: flex-end; padding-bottom: 21px; }
.thumb { height: 130px; background: #cdcdcd; }
.actions { width: 146px; padding: 30px 0 0 14px; display: flex; flex-direction: column; gap: 39px; }
.group { display: flex; flex-direction: column; gap: 9px; }
.act { height: 27px; border: 1px solid #adadad; background: #e1e1e1; display: flex; align-items: center; padding-left: 8px; text-align: left; }
.act svg { width: 16px; height: 16px; margin-right: 7px; }
.focused { background: #e5f1fb; border-color: #0078d7; }
.moves { display: flex; flex-direction: column; gap: 14px; margin: -6px 0 0 -6px; }
.moves button { width: 14px; height: 12px; display: flex; justify-content: center; }
.moves svg { width: 12px; height: 12px; }
.foot { display: flex; gap: 6px; margin: 20px 10px 0 11px; padding: 14px 0 10px; border-top: 1px solid #a0a0a0; }
.foot button { width: 83px; height: 21px; border: 1px solid #adadad; background: #e1e1e1; display: flex; align-items: center; padding-left: 2px; }
.foot svg { width: 16px; height: 16px; }
.foot span { flex: 1; text-align: center; }
.foot .close { width: 73px; margin-left: auto; }
.grip { position: absolute; right: 3px; bottom: 3px; width: 9px; height: 9px; }

.limits { left: 190px; top: 381px; width: 353px; box-shadow: 8px 8px 8px rgba(0,0,0,.3); }
.limits .titlebar { height: 25px; padding-left: 3px; }
.limits .winbtns button { width: 30px; height: 24px; }
.limits-body { padding: 11px 0 12px 10px; display: flex; flex-direction: column; }
.limits label, .limits p { font-family: Roboto, "Open Sans", sans-serif; }
.field { display: flex; justify-content: space-between; align-items: center; padding-right: 43px; }
.field input { width: 80px; height: 20px; border: 1px solid #0078d7; background: #fff; padding: 0 5px; }
.limits p { margin: 16px 0 26px; }
.lessons { align-items: flex-start; }
.lessons label { width: 190px; padding-top: 4px; }
.combo { display: flex; align-items: center; width: 80px; height: 21px; border: 1px solid #7a7a7a; background: #fff; padding: 0 4px 0 5px; }
.combo select { appearance: none; flex: 1; }
.combo svg { width: 10px; height: 6px; }
.ok { align-self: flex-end; width: 73px; height: 21px; margin: 41px 11px 0 0; border: 2px solid #0078d7; background: #e1e1e1; }

.marks { position: absolute; left: 0; top: 0; width: 836px; height: 767px; pointer-events: none; }
```
